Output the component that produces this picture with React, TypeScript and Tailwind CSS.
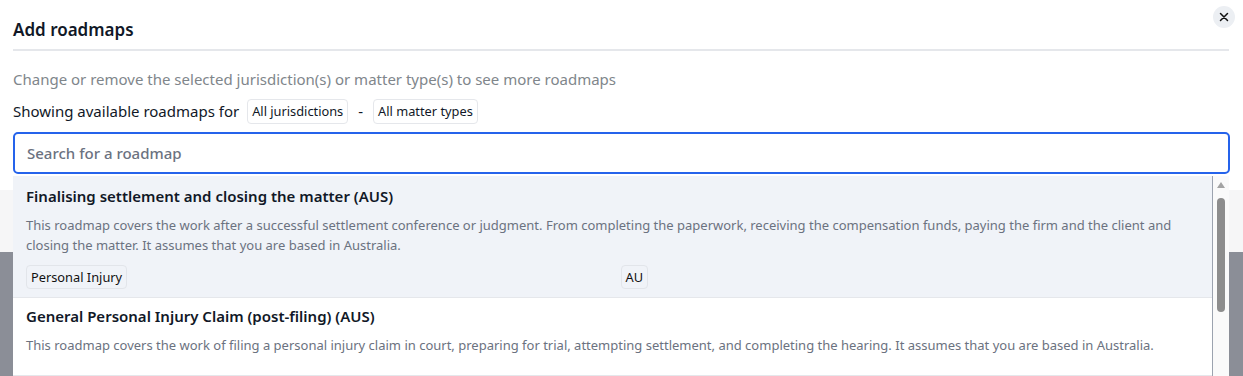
import React from "react";

const font = { fontFamily: '"Noto Sans", "Open Sans", sans-serif' };

function Chip({ children }: { children: React.ReactNode }) {
  return (
    <span className="inline-flex items-center h-[25px] px-[4px] border border-[#e5e7eb] rounded-[4px] text-[12.8px] text-[#111827] bg-white leading-none">
      {children}
    </span>
  );
}

function Tag({ children }: { children: React.ReactNode }) {
  return (
    <span className="inline-flex items-center h-[24px] px-[4px] border border-[#e2e5ea] rounded-[4px] text-[12.8px] text-[#111] leading-none">
      {children}
    </span>
  );
}

export default function App() {
  return (
    <div className="relative w-[1243px] h-[376px] overflow-hidden bg-[#8b8e97]" style={font}>
      <div className="h-[252px] bg-white flex flex-col">
        <div className="h-[190px] bg-white px-[13px]">
          <div className="flex items-center justify-between h-[49px] relative">
            <h2 className="text-[17px] font-semibold text-[#111827] pt-[10px]">Add roadmaps</h2>
            <button className="absolute right-[-5px] top-[6px] w-[22px] h-[22px] rounded-full bg-[#eceff3] flex items-center justify-center">
              <svg width="10" height="10" viewBox="0 0 10 10" stroke="#111" strokeWidth="1.5" strokeLinecap="round">
                <path d="M1.5 1.5 L8.5 8.5 M8.5 1.5 L1.5 8.5" />
              </svg>
            </button>
          </div>
          <div className="h-[2px] bg-[#e5e7eb] mr-[1px]" />
          <p className="mt-[18px] text-[15px] text-[#80868b] leading-[20px]">
            Change or remove the selected jurisdiction(s) or matter type(s) to see more roadmaps
          </p>
          <div className="mt-[10px] flex items-center gap-[8px] text-[15px] text-[#111827] h-[25px]">
            <span>Showing available roadmaps for</span>
            <Chip>All jurisdictions</Chip>
            <span className="px-[2px]">-</span>
            <Chip>All matter types</Chip>
          </div>
          <div className="mt-[8px] h-[42px] border-2 border-[#2563eb] rounded-[5px] flex items-center px-[12px]">
            <span className="text-[15px] font-medium text-[#6b7280]">Search for a roadmap</span>
          </div>
        </div>
        <div className="flex-1 bg-[#f6f6f7]" />
      </div>

      <div className="absolute left-[13px] top-[176px] w-[1216px] h-[200px] flex">
        <div className="w-[1200px] border-r border-[#9ca3af]">
          <div className="bg-[#f0f3f8] border-b border-[#e5e7eb] px-[13px] pt-[9px] h-[122px]">
            <div className="text-[15px] font-semibold text-[#111827] leading-[22px]">
              Finalising settlement and closing the matter (AUS)
            </div>
            <p className="mt-[8px] text-[13px] text-[#6b7280] leading-[20px]">
              This roadmap covers the work after a successful settlement conference or judgment. From completing the paperwork, receiving the compensation funds, paying the firm and the client and closing the matter. It assumes that you are based in Australia.
            </p>
            <div className="mt-[9px] grid grid-cols-2 gap-4">
              <div><Tag>Personal Injury</Tag></div>
              <div><Tag>AU</Tag></div>
            </div>
          </div>
          <div className="bg-white border-b border-[#e5e7eb] px-[13px] pt-[7px] h-[78px]">
            <div className="text-[15px] font-semibold text-[#111827] leading-[22px]">
              General Personal Injury Claim (post-filing) (AUS)
            </div>
            <p className="mt-[8px] text-[13px] text-[#6b7280] leading-[20px]">
              This roadmap covers the work of filing a personal injury claim in court, preparing for trial, attempting settlement, and completing the hearing. It assumes that you are based in Australia.
            </p>
          </div>
        </div>
        <div className="w-[16px] bg-[#fafafa] relative">
          <svg className="absolute left-[4px] top-[6px]" width="8" height="6" viewBox="0 0 8 6">
            <path d="M4 0 L8 6 L0 6 Z" fill="#a3a3a3" />
          </svg>
          <div className="absolute left-[4px] top-[22px] w-[8px] h-[114px] rounded-full bg-[#8d8d8d]" />
        </div>
      </div>
    </div>
  );
}
